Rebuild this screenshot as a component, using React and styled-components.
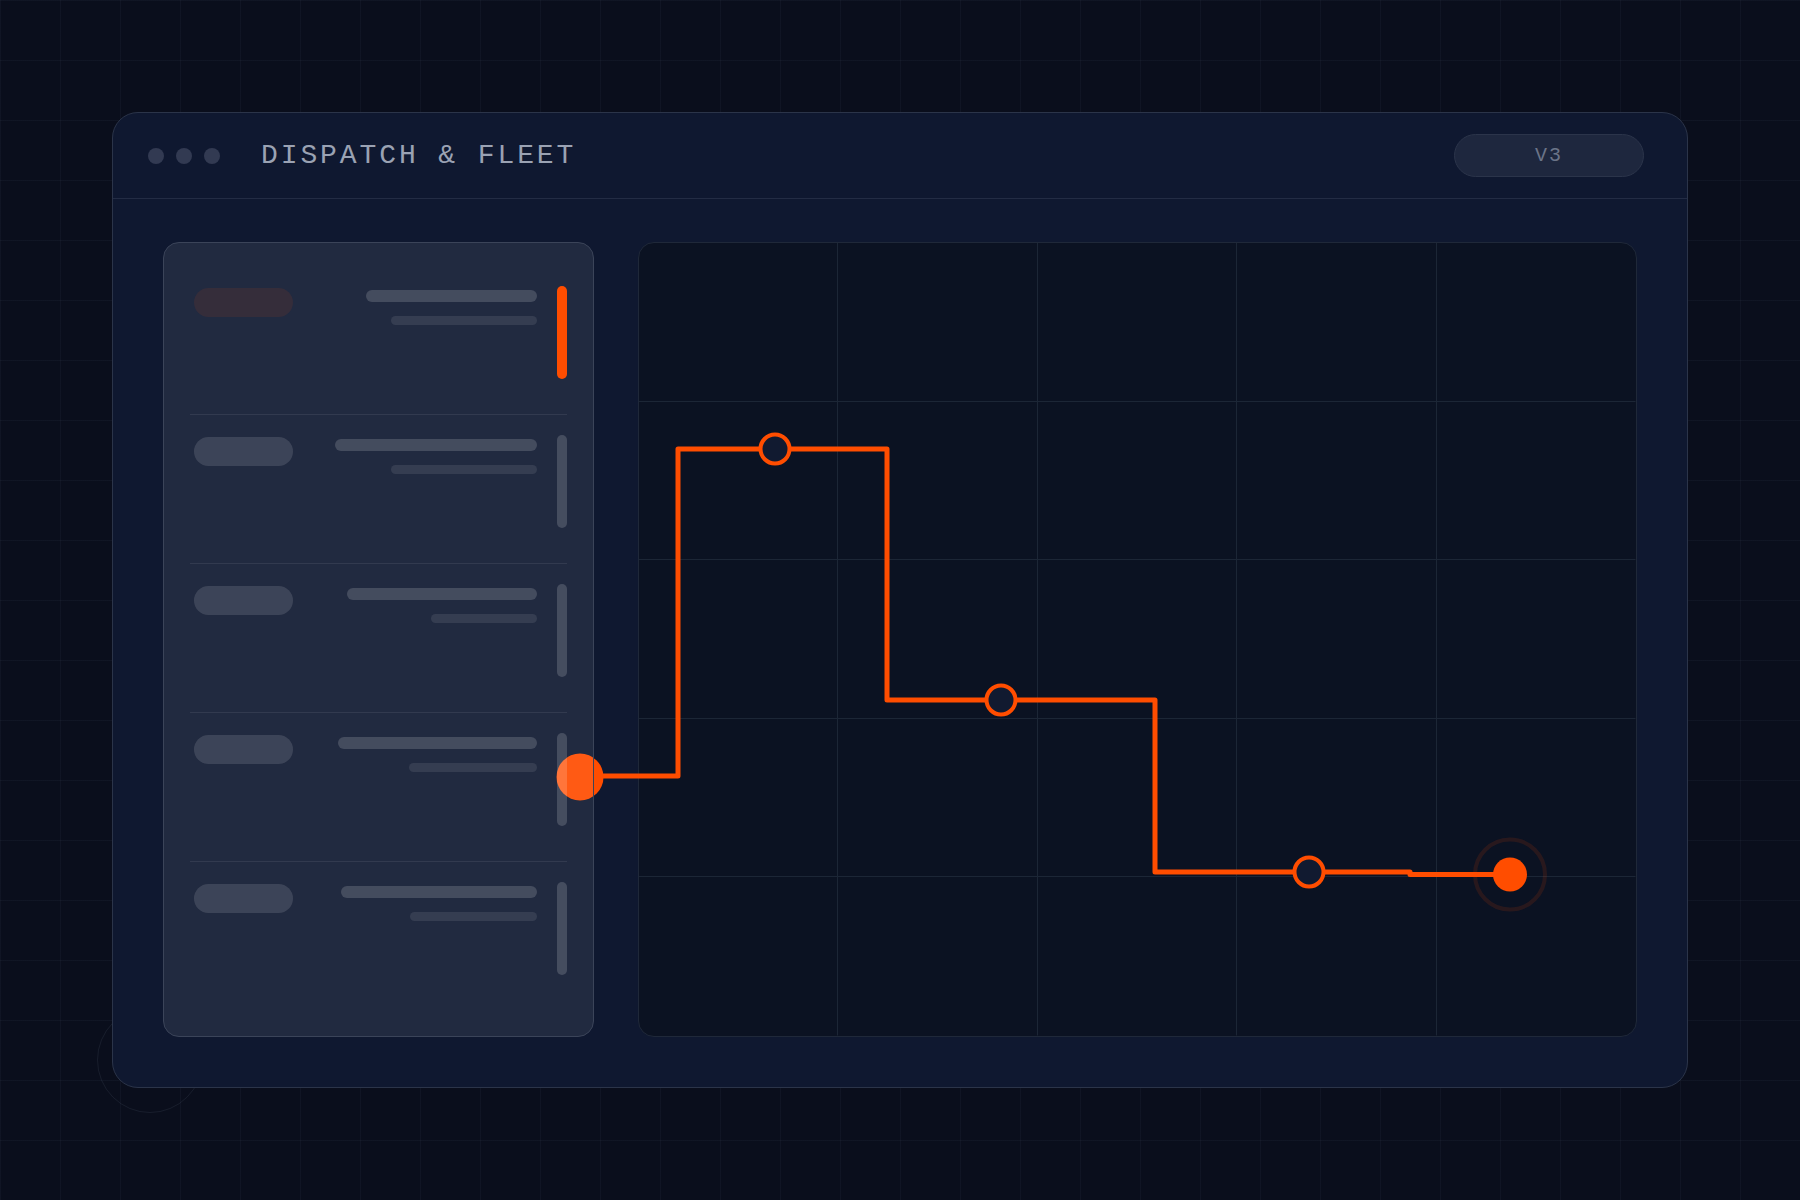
import styled, { createGlobalStyle } from 'styled-components';

const ORANGE = '#ff4d00';

const GlobalStyle = createGlobalStyle`
  * { box-sizing: border-box; }
  html, body { margin: 0; height: 100%; }
  body {
    background-color: #0a0e1c;
    background-image:
      linear-gradient(to right, rgba(148, 163, 184, 0.05) 1px, transparent 1px),
      linear-gradient(to bottom, rgba(148, 163, 184, 0.05) 1px, transparent 1px);
    background-size: 60px 60px;
    font-family: "Liberation Mono", "DejaVu Sans Mono", monospace;
  }
`;

const Page = styled.div`
  position: relative;
  height: 100vh;
  padding: 112px;
`;

const Ring = styled.div`
  position: absolute;
  left: 97px;
  top: 1007px;
  width: 106px;
  height: 106px;
  border-radius: 50%;
  border: 1.5px solid rgba(148, 163, 184, 0.1);
`;

const Window = styled.div`
  position: relative;
  z-index: 1;
  height: 100%;
  display: flex;
  flex-direction: column;
  background: #0f1830;
  border: 1px solid #2b3449;
  border-radius: 26px;
`;

const Header = styled.header`
  height: 86px;
  display: flex;
  align-items: center;
  padding: 0 43px 0 35px;
  border-bottom: 1px solid #232c44;
`;

const Dots = styled.div`
  display: flex;
  gap: 12px;
`;

const Dot = styled.span`
  width: 16px;
  height: 16px;
  border-radius: 50%;
  background: #323a52;
`;

const Title = styled.h1`
  margin: 0 0 0 41px;
  font-family: "Liberation Mono", "DejaVu Sans Mono", monospace;
  font-weight: 400;
  font-size: 28px;
  letter-spacing: 2.9px;
  color: #9aa2b3;
`;

const Version = styled.div`
  margin-left: auto;
  width: 190px;
  height: 43px;
  display: flex;
  align-items: center;
  justify-content: center;
  border-radius: 22px;
  background: #1e273e;
  border: 1px solid #2b344a;
  font-size: 20px;
  letter-spacing: 2px;
  color: #6b7488;
`;

const Body = styled.main`
  flex: 1;
  display: grid;
  grid-template-columns: 431px 1fr;
  gap: 44px;
  padding: 43px 50px 50px;
`;

const List = styled.section`
  position: relative;
  z-index: 2;
  background: rgba(255, 255, 255, 0.078);
  border: 1px solid #3b4459;
  border-radius: 16px;
  padding: 23px 26px;
`;

const Row = styled.div`
  height: 149px;
  display: flex;
  align-items: flex-start;
  padding-top: 20px;
  border-bottom: 1px solid ${(p) => (p.$last ? 'transparent' : 'rgba(255, 255, 255, 0.08)')};
`;

const Tag = styled.span`
  margin: 2px 0 0 4px;
  width: 99px;
  height: 29px;
  border-radius: 15px;
  background: ${(p) => (p.$active ? 'rgba(255, 77, 0, 0.09)' : 'rgba(255, 255, 255, 0.127)')};
`;

const Lines = styled.div`
  margin-left: auto;
  margin-top: 4px;
  display: flex;
  flex-direction: column;
  align-items: flex-end;
  gap: 14px;
`;

const Line = styled.span`
  display: block;
  height: ${(p) => (p.$sub ? 9 : 12)}px;
  border-radius: 6px;
  background: ${(p) => (p.$sub ? 'rgba(255, 255, 255, 0.09)' : 'rgba(255, 255, 255, 0.16)')};
`;

const Bar = styled.span`
  margin-left: 20px;
  width: 10px;
  height: 93px;
  border-radius: 5px;
  background: ${(p) => (p.$active ? ORANGE : 'rgba(255, 255, 255, 0.165)')};
`;

const Chart = styled.section`
  position: relative;
  background: #0b1222;
  border: 1px solid #1f2839;
  border-radius: 16px;
  display: grid;
  grid-template-columns: repeat(5, 1fr);
  grid-template-rows: repeat(5, 1fr);
`;

const Cell = styled.div`
  border-right: 1px solid ${(p) => (p.$lastCol ? 'transparent' : 'rgba(148, 180, 190, 0.13)')};
  border-bottom: 1px solid ${(p) => (p.$lastRow ? 'transparent' : 'rgba(148, 180, 190, 0.13)')};
`;

const Route = styled.svg`
  position: absolute;
  left: -1px;
  top: -1px;
  overflow: visible;
  pointer-events: none;
`;

const rows = [
  { active: true, main: 171, sub: 146 },
  { main: 202, sub: 146 },
  { main: 190, sub: 106 },
  { main: 199, sub: 128 },
  { main: 196, sub: 127 },
];

const stops = [
  [137, 207],
  [363, 458],
  [671, 630],
];

function RouteLine() {
  return (
    <Route width="998" height="794" viewBox="0 0 998 794">
      <path
        d="M -58 534 H 40 V 207 H 249 V 458 H 517 V 630 H 772 V 632.5 H 872"
        fill="none"
        stroke={ORANGE}
        strokeWidth="5"
        strokeLinejoin="round"
      />
      {stops.map(([x, y]) => (
        <circle key={x} cx={x} cy={y} r="14.5" fill="#111a30" stroke={ORANGE} strokeWidth="4" />
      ))}
      <circle cx="-58" cy="535" r="23.5" fill={ORANGE} />
      <circle cx="872" cy="632.5" r="35" fill="none" stroke="rgba(255, 77, 0, 0.12)" strokeWidth="4" />
      <circle cx="872" cy="632.5" r="17" fill={ORANGE} />
    </Route>
  );
}

export default function App() {
  return (
    <>
      <GlobalStyle />
      <Page>
        <Ring />
        <Window>
          <Header>
            <Dots>
              <Dot />
              <Dot />
              <Dot />
            </Dots>
            <Title>DISPATCH &amp; FLEET</Title>
            <Version>V3</Version>
          </Header>
          <Body>
            <List>
              {rows.map((r, i) => (
                <Row key={i} $last={i === rows.length - 1}>
                  <Tag $active={r.active} />
                  <Lines>
                    <Line style={{ width: r.main }} />
                    <Line $sub style={{ width: r.sub }} />
                  </Lines>
                  <Bar $active={r.active} />
                </Row>
              ))}
            </List>
            <Chart>
              {Array.from({ length: 25 }, (_, i) => (
                <Cell key={i} $lastCol={i % 5 === 4} $lastRow={i >= 20} />
              ))}
              <RouteLine />
            </Chart>
          </Body>
        </Window>
      </Page>
    </>
  );
}
